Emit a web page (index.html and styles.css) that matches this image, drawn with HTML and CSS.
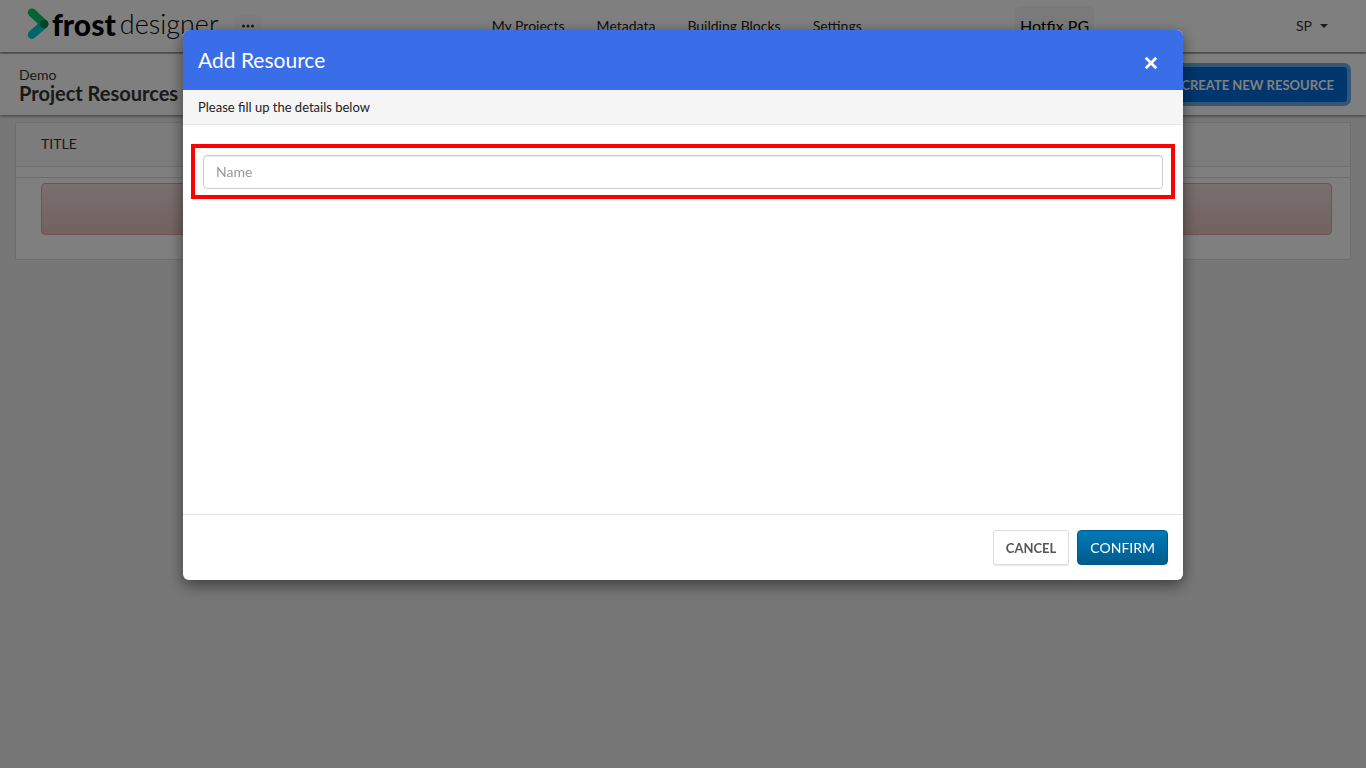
FILE: index.html
```html
<!DOCTYPE html>
<html lang="en">
<head>
<meta charset="utf-8">
<title>Frost Designer - Project Resources</title>
<link rel="stylesheet" href="styles.css">
</head>
<body>
<header class="topbar">
  <div class="brand">
    <a class="logo" href="#">
      <svg class="logo-mark" viewBox="0 0 24 32" aria-hidden="true">
        <path d="M5 26.700 17.200 16" stroke="#00c8d2" stroke-width="8.400" stroke-linecap="round"/>
        <path d="M5 4.700 17.200 16" stroke="#00c870" stroke-width="8.400" stroke-linecap="round"/>
        <circle cx="17.200" cy="16" r="4.200" fill="#00884a"/>
      </svg>
      <span class="logo-bold">frost</span><span class="logo-light">designer</span>
    </a>
    <button class="more" type="button" aria-label="More">
      <svg viewBox="0 0 12 4" width="12" height="4" aria-hidden="true"><circle cx="1.500" cy="2" r="1.500"/><circle cx="6" cy="2" r="1.500"/><circle cx="10.500" cy="2" r="1.500"/></svg>
    </button>
  </div>
  <nav class="nav">
    <a href="#">My Projects</a>
    <a href="#">Metadata</a>
    <a href="#">Building Blocks</a>
    <a href="#">Settings</a>
  </nav>
  <div class="env"><span class="env-tag">Hotfix PG</span></div>
  <button class="user" type="button">SP <span class="caret"></span></button>
</header>

<section class="subbar">
  <div class="heading">
    <div class="project">Demo</div>
    <h1 class="title">Project Resources</h1>
  </div>
  <button class="create" type="button">CREATE NEW RESOURCE</button>
</section>

<main class="content">
  <div class="card">
    <div class="card-head">TITLE</div>
    <div class="card-gap"></div>
    <div class="card-body"><div class="alert"></div></div>
  </div>
</main>

<div class="backdrop">
  <div class="modal" role="dialog" aria-modal="true" aria-labelledby="modal-title">
    <div class="modal-head">
      <h2 class="modal-title" id="modal-title">Add Resource</h2>
      <button class="close" type="button" aria-label="Close">
        <svg viewBox="0 0 12 12" width="14" height="14" aria-hidden="true"><path d="M1.500 1.500 10.500 10.500M10.500 1.500 1.500 10.500" stroke="#fff" stroke-width="2.400"/></svg>
      </button>
    </div>
    <p class="hint">Please fill up the details below</p>
    <form class="modal-body">
      <div class="highlight"><input class="field" type="text" placeholder="Name" aria-label="Name"></div>
    </form>
    <div class="modal-foot">
      <button class="btn cancel" type="button">CANCEL</button>
      <button class="btn confirm" type="button">CONFIRM</button>
    </div>
  </div>
</div>
</body>
</html>
```
FILE: styles.css
```css
* { box-sizing: border-box; }
body {
  margin: 0;
  min-height: 100vh;
  background: #efefef;
  color: #333;
  font: 14px/20px Lato, "Liberation Sans", sans-serif;
}
button, input { font: inherit; }
a { color: inherit; text-decoration: none; }

.topbar {
  position: relative;
  display: grid;
  grid-template-columns: 36% 38.3% 1fr auto;
  align-items: center;
  height: 52px;
  background: #fff;
  box-shadow: 0 1px 2px rgba(0, 0, 0, .5);
}
.brand { display: flex; align-items: center; gap: 16px; padding-left: 27px; }
.logo { display: flex; align-items: center; padding-bottom: 4px; color: #000; line-height: 40px; }
.logo-mark { width: 24px; height: 32px; margin-right: 1px; fill: none; }
.logo-bold { font-weight: 900; font-size: 30px; margin-right: 4px; }
.logo-light { font-weight: 300; font-size: 27px; }
.more {
  display: flex;
  align-items: center;
  justify-content: center;
  width: 28px;
  height: 22px;
  padding: 0;
  border: 0;
  border-radius: 4px;
  background: #f8f8f8;
  fill: #333;
}
.nav { display: flex; gap: 32px; color: #222; }
.env-tag {
  display: inline-block;
  padding: 10px 5px;
  border-radius: 5px;
  background: #f5f5f5;
  color: #000;
  font-size: 16px;
}
.user {
  display: flex;
  align-items: center;
  gap: 8px;
  margin-right: 38px;
  padding: 0;
  border: 0;
  background: none;
  color: #333;
}
.caret { border: 4px solid transparent; border-top-color: #333; border-bottom: 0; }

.subbar {
  display: flex;
  align-items: center;
  justify-content: space-between;
  height: 61px;
  margin-top: 2px;
  padding: 0 19px;
  background: #fff;
  box-shadow: 0 1px 3px rgba(0, 0, 0, .5);
}
.project { line-height: 17px; }
.title { margin: 0; font-size: 20px; line-height: 20px; font-weight: 700; }
.create {
  height: 35px;
  padding: 0 13px;
  border: 0;
  border-radius: 3px;
  background: #006cdc;
  box-shadow: 0 0 0 4px #66afe9;
  color: #fff;
  font-size: 13px;
  font-weight: 700;
}

.content { padding: 7px 15px; }
.card { border: 1px solid #ddd; background: #fff; }
.card-head { padding: 11px 25px 12px; background: #f8f8f8; border-bottom: 1px solid #ddd; }
.card-gap { height: 11px; border-bottom: 1px solid #ddd; }
.card-body { padding: 5px 18px 24px 25px; }
.alert {
  height: 52px;
  border: 1px solid #dca7a7;
  border-radius: 4px;
  background: linear-gradient(#f2dede, #e7c3c3);
}

.backdrop {
  position: fixed;
  inset: 0;
  padding: 30px 16px;
  background: rgba(0, 0, 0, .5);
}
.modal {
  display: flex;
  flex-direction: column;
  max-width: 1000px;
  min-height: 550px;
  margin: 0 auto;
  overflow: hidden;
  border-radius: 6px;
  background: #fff;
  box-shadow: 0 5px 15px rgba(0, 0, 0, .5);
}
.modal-head {
  display: flex;
  align-items: center;
  justify-content: space-between;
  height: 60px;
  padding: 0 15px;
  background: #3a6de8;
  color: #fff;
}
.modal-title { margin: 0; font-size: 21px; line-height: 30px; font-weight: 400; }
.close { display: flex; margin-top: 5px; padding: 0 10px; border: 0; background: none; }
.hint {
  margin: 0;
  padding: 7px 15px;
  border-bottom: 1px solid #e8e8e8;
  background: #f5f5f5;
  color: #222;
  font-size: 13px;
}
.modal-body { flex: 1; padding: 19px 8px; }
.highlight { padding: 7px 8px 6px; border: 4px solid #f00; }
.field {
  display: block;
  width: 100%;
  height: 34px;
  padding: 5px 12px 7px;
  border: 1px solid #ccc;
  border-radius: 4px;
  box-shadow: inset 0 1px 1px rgba(0, 0, 0, .08);
}
.field::placeholder { color: #999; }
.modal-foot {
  display: flex;
  justify-content: flex-end;
  gap: 8px;
  padding: 15px;
  border-top: 1px solid #e5e5e5;
}
.btn { height: 35px; padding: 0 12px; border: 1px solid #ddd; border-radius: 3px; }
.cancel {
  background: #fff;
  color: #555;
  font-size: 13px;
  font-weight: 700;
  box-shadow: 0 1px 1px rgba(0, 0, 0, .1);
}
.confirm {
  border-color: #005b8c;
  border-radius: 4px;
  background: linear-gradient(#007ab8, #005b8c);
  color: #fff;
}
```
